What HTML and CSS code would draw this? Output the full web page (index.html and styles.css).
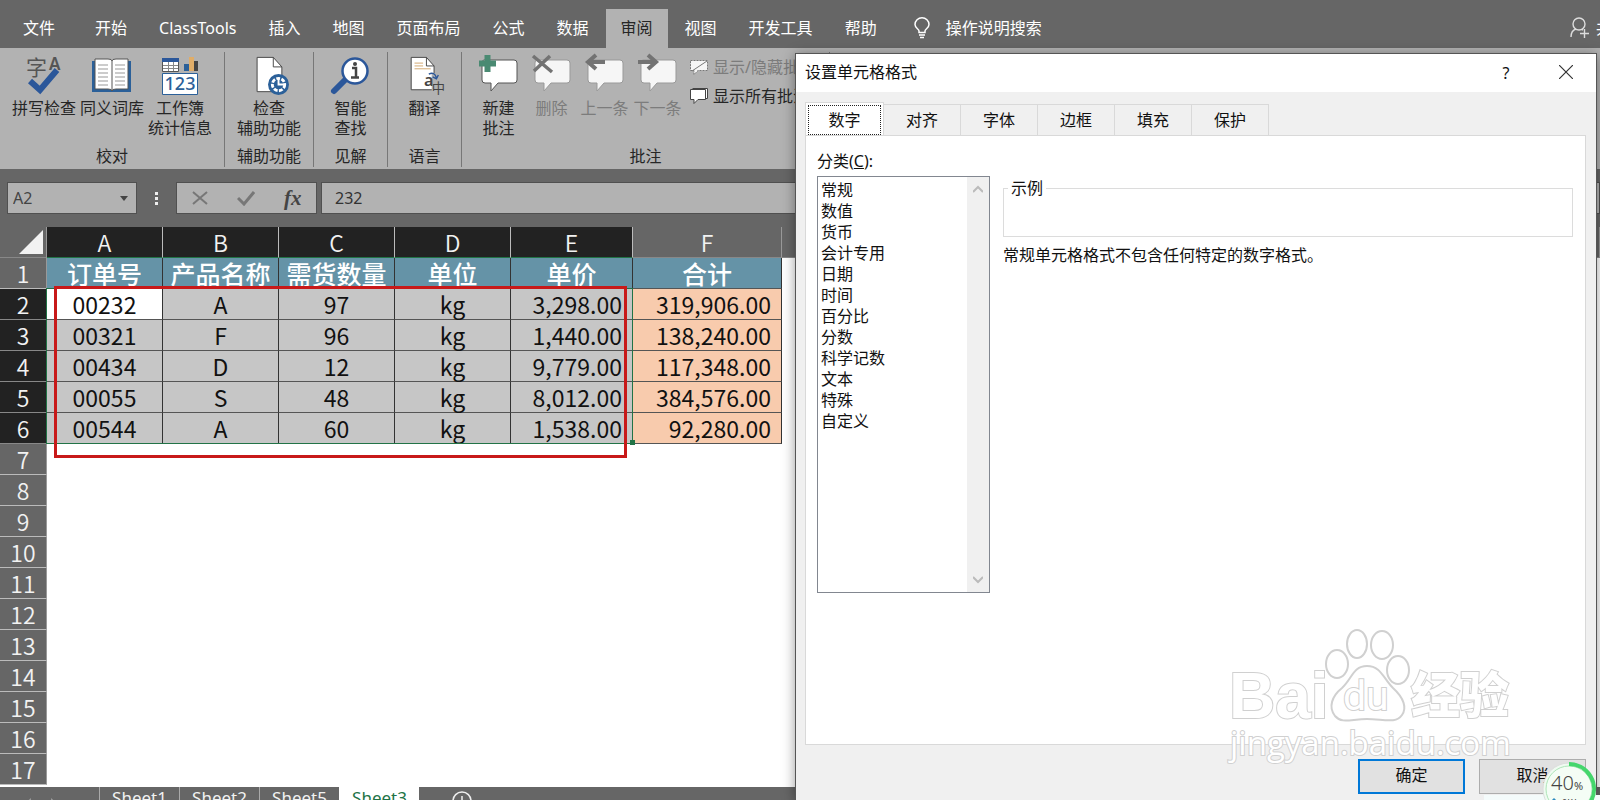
FILE: index.html
```html
<!DOCTYPE html>
<html lang="zh-CN">
<head>
    <meta charset="UTF-8">
    <meta name="viewport" content="width=device-width, initial-scale=1.0">
    <title>设置单元格格式</title>
    <link rel="stylesheet" href="styles.css">
</head>
<body>
    <nav class="menu">
        <button class="menu-tab file">文件</button>
        <button class="menu-tab">开始</button>
        <button class="menu-tab">ClassTools</button>
        <button class="menu-tab">插入</button>
        <button class="menu-tab">地图</button>
        <button class="menu-tab">页面布局</button>
        <button class="menu-tab">公式</button>
        <button class="menu-tab">数据</button>
        <button class="menu-tab active">审阅</button>
        <button class="menu-tab">视图</button>
        <button class="menu-tab">开发工具</button>
        <button class="menu-tab">帮助</button>
        <button class="tell-me">
            <svg width="16" height="22" viewBox="0 0 16 22" fill="none" stroke="#fff" stroke-width="1.5"><path d="M5 15.500V14C5 12 1 11 1 7.500a7 6.700 0 0 1 14 0C15 11 11 12 11 14v1.500zM5 18h6M6 20.500h4"/></svg>
            操作说明搜索
        </button>
        <button class="share">
            <svg width="20" height="22" viewBox="0 0 20 22" fill="none" stroke="#ddd" stroke-width="1.400"><circle cx="9" cy="7" r="6"/><path d="M1 20c0-5 2-7 5-8M12 12.500l1 .5M10 16.500h9M14.500 12v9"/></svg>
            共享
        </button>
    </nav>

    <section class="ribbon">
        <div class="group proof">
            <div class="tools">
                <button class="tool">
                    <svg width="40" height="40" viewBox="0 0 40 40"><text class="zi" x="2" y="20">字</text><text class="latin" x="25" y="15">A</text><path d="M6 26l10 9L33 15" fill="none" stroke="#2b579a" stroke-width="6"/></svg>
                    <span>拼写检查</span>
                </button>
                <button class="tool">
                    <svg width="40" height="40" viewBox="0 0 40 40"><path d="M0 6h39v31H0z" fill="#2b6099"/><path d="M3 4h13q4 0 4 2 0-2 4-2h12v30H24q-4 0-4 2 0-2-4-2H3z" fill="#fff" stroke="#555"/><path d="M20 6v30" stroke="#555"/><path d="M6 10h10M6 14h10M6 18h10M6 22h10M6 26h10M6 30h10M23 10h10M23 14h10M23 18h10M23 22h10M23 26h10M23 30h10" stroke="#999"/></svg>
                    <span>同义词库</span>
                </button>
                <button class="tool">
                    <svg width="40" height="40" viewBox="0 0 40 40"><path d="M2.500 3.500h16v13h-16z" fill="#fff" stroke="#555"/><path d="M2 3h17v4H2z" fill="#2b579a"/><path d="M3 10.500h15M3 13.500h15M8.500 7v9M13.500 7v9" stroke="#888"/><path d="M24 9h5v7h-5z" fill="#2b6099"/><path d="M29 2h5v14h-5z" fill="#e0ad68"/><path d="M34 6h4v10h-4z" fill="#444"/><path d="M2.500 18.500h35v21h-35z" fill="#fff" stroke="#2b6099"/><text class="num" x="20" y="35">123</text></svg>
                    <span>工作簿<br>统计信息</span>
                </button>
            </div>
            <div class="group-name">校对</div>
        </div>
        <div class="group access">
            <div class="tools">
                <button class="tool">
                    <svg width="40" height="42" viewBox="0 0 40 42"><path d="M7.500 2.500h17l9 10v26h-26z" fill="#fff" stroke="#444"/><path d="M24.500 2.500v10h9" fill="none" stroke="#444"/><circle cx="30" cy="31" r="11" fill="#2b6099"/><circle cx="30" cy="31" r="6.500" fill="none" stroke="#fff" stroke-width="3" stroke-dasharray="4 1.500"/><path d="M30 24v7h7" fill="none" stroke="#fff" stroke-width="2"/></svg>
                    <span>检查<br>辅助功能</span>
                </button>
            </div>
            <div class="group-name">辅助功能</div>
        </div>
        <div class="group insight">
            <div class="tools">
                <button class="tool">
                    <svg width="40" height="40" viewBox="0 0 40 40"><path d="M3 36L14 25" stroke="#2b579a" stroke-width="6" stroke-linecap="round"/><circle cx="24" cy="16" r="12.500" fill="#fff" stroke="#2b579a" stroke-width="2.500"/><path d="M21 13h4v9M20 22.500h8" stroke="#444" stroke-width="2.500" fill="none"/><circle cx="24" cy="9" r="2" fill="#444"/></svg>
                    <span>智能<br>查找</span>
                </button>
            </div>
            <div class="group-name">见解</div>
        </div>
        <div class="group lang">
            <div class="tools">
                <button class="tool">
                    <svg width="40" height="42" viewBox="0 0 40 42"><path d="M5.500 2.500h16l8 9v25h-24z" fill="#fff" stroke="#444"/><path d="M21.500 2.500v9h8" fill="none" stroke="#444"/><path d="M9 8.500h9M9 11.500h9M9 14.500h17" stroke="#d2a56d"/><path d="M27 19h13v23H27z" fill="#b2b2b2"/><text class="lat-a" x="19" y="33">a</text><text class="zh" x="27" y="40">中</text><path d="M24 20q6-3 8 4m-4-1l4 2 2-4" fill="none" stroke="#2b579a" stroke-width="1.500"/></svg>
                    <span>翻译</span>
                </button>
            </div>
            <div class="group-name">语言</div>
        </div>
        <div class="group comments">
            <div class="tools">
                <button class="tool">
                    <svg width="40" height="40" viewBox="0 0 40 40"><path d="M5 5h30q3 0 3 3v17q0 3-3 3H19l-7 8v-8H6q-3 0-3-3V8q0-3 2-3z" fill="#fff" stroke="#555"/><path d="M0 8.500H17M8.500 0V17" stroke="#4a8a72" stroke-width="6"/></svg>
                    <span>新建<br>批注</span>
                </button>
                <button class="tool" disabled>
                    <svg width="40" height="40" viewBox="0 0 40 40"><path d="M5 5h30q3 0 3 3v17q0 3-3 3H19l-7 8v-8H6q-3 0-3-3V8q0-3 2-3z" fill="#f6f6f6" stroke="#999"/><path d="M1 1l19 16M18 1L2 16" stroke="#737373" stroke-width="3.500"/></svg>
                    <span>删除</span>
                </button>
                <button class="tool" disabled>
                    <svg width="40" height="40" viewBox="0 0 40 40"><path d="M5 5h30q3 0 3 3v17q0 3-3 3H19l-7 8v-8H6q-3 0-3-3V8q0-3 2-3z" fill="#f6f6f6" stroke="#999"/><path d="M3 7h17M11 0L3 7l8 7" fill="none" stroke="#737373" stroke-width="4"/></svg>
                    <span>上一条</span>
                </button>
                <button class="tool" disabled>
                    <svg width="40" height="40" viewBox="0 0 40 40"><path d="M5 5h30q3 0 3 3v17q0 3-3 3H19l-7 8v-8H6q-3 0-3-3V8q0-3 2-3z" fill="#f6f6f6" stroke="#999"/><path d="M0 7h17M10 0l8 7-8 7" fill="none" stroke="#737373" stroke-width="4"/></svg>
                    <span>下一条</span>
                </button>
                <div class="small-tools">
                    <button class="small-tool" disabled>
                        <svg width="20" height="18" viewBox="0 0 20 18"><path d="M1.500 2.500h17v10H9l-4 4v-4H1.500z" fill="#f6f6f6" stroke="#777" stroke-dasharray="2 1"/><path d="M3 13L18 3" stroke="#777"/></svg>
                        显示/隐藏批注
                    </button>
                    <button class="small-tool">
                        <svg width="20" height="18" viewBox="0 0 20 18"><path d="M3.500 1.500h15v10h-3" fill="#fff" stroke="#444"/><path d="M1.500 2.500h15v10H9l-4 4v-4H1.500z" fill="#fff" stroke="#444"/></svg>
                        显示所有批注
                    </button>
                </div>
            </div>
            <div class="group-name">批注</div>
        </div>
    </section>

    <section class="formula-bar">
        <div class="name-box">
            <input type="text" value="A2" aria-label="名称框">
            <svg width="8" height="5" viewBox="0 0 8 5"><path d="M0 0h8L4 5z" fill="#444"/></svg>
        </div>
        <div class="dots"><i></i><i></i><i></i></div>
        <div class="fx">
            <button aria-label="取消输入"><svg width="16" height="16" viewBox="0 0 16 16"><path d="M1 2l14 12M15 2L1 14" stroke="#777" stroke-width="2"/></svg></button>
            <button aria-label="输入"><svg width="18" height="16" viewBox="0 0 18 16"><path d="M1 8l6 6L17 2" fill="none" stroke="#777" stroke-width="3"/></svg></button>
            <button class="fx-button">fx</button>
        </div>
        <input class="formula" type="text" value="232" aria-label="编辑栏">
    </section>

    <main class="sheet">
        <table>
            <colgroup>
                <col class="w-head"><col class="w-cell"><col class="w-cell"><col class="w-cell"><col class="w-cell"><col class="w-price"><col class="w-total"><col>
            </colgroup>
            <thead>
                <tr>
                    <th class="corner"><svg width="26" height="26" viewBox="0 0 26 26"><path d="M25 1v24H1z" fill="#f2f2f2"/></svg></th>
                    <th class="on">A</th><th class="on">B</th><th class="on">C</th><th class="on">D</th><th class="on">E</th><th>F</th><th></th>
                </tr>
            </thead>
            <tbody>
                <tr class="titles"><th>1</th><td>订单号</td><td>产品名称</td><td>需货数量</td><td>单位</td><td>单价</td><td>合计</td><td class="blank"></td></tr>
                <tr class="data"><th>2</th><td class="current">00232</td><td>A</td><td>97</td><td>kg</td><td class="price">3,298.00</td><td class="total">319,906.00</td><td class="blank"></td></tr>
                <tr class="data"><th>3</th><td>00321</td><td>F</td><td>96</td><td>kg</td><td class="price">1,440.00</td><td class="total">138,240.00</td><td class="blank"></td></tr>
                <tr class="data"><th>4</th><td>00434</td><td>D</td><td>12</td><td>kg</td><td class="price">9,779.00</td><td class="total">117,348.00</td><td class="blank"></td></tr>
                <tr class="data"><th>5</th><td>00055</td><td>S</td><td>48</td><td>kg</td><td class="price">8,012.00</td><td class="total">384,576.00</td><td class="blank"></td></tr>
                <tr class="data"><th>6</th><td>00544</td><td>A</td><td>60</td><td>kg</td><td class="price">1,538.00</td><td class="total">92,280.00</td><td class="blank"></td></tr>
                <tr><th>7</th><td class="blank" colspan="7"></td></tr>
                <tr><th>8</th><td class="blank" colspan="7"></td></tr>
                <tr><th>9</th><td class="blank" colspan="7"></td></tr>
                <tr><th>10</th><td class="blank" colspan="7"></td></tr>
                <tr><th>11</th><td class="blank" colspan="7"></td></tr>
                <tr><th>12</th><td class="blank" colspan="7"></td></tr>
                <tr><th>13</th><td class="blank" colspan="7"></td></tr>
                <tr><th>14</th><td class="blank" colspan="7"></td></tr>
                <tr><th>15</th><td class="blank" colspan="7"></td></tr>
                <tr><th>16</th><td class="blank" colspan="7"></td></tr>
                <tr><th>17</th><td class="blank" colspan="7"></td></tr>
            </tbody>
        </table>
        <div class="selection"></div>
        <div class="red-box"></div>
    </main>

    <footer class="sheet-tabs">
        <div class="arrows">
            <svg width="36" height="14" viewBox="0 0 36 14"><path d="M8 1v12L1 7zM28 1v12l7-6z" fill="#999"/></svg>
        </div>
        <button>Sheet1</button>
        <button>Sheet2</button>
        <button>Sheet5</button>
        <button class="active">Sheet3</button>
        <button class="add" aria-label="新工作表"><svg width="20" height="20" viewBox="0 0 20 20" fill="none" stroke="#eee" stroke-width="1.500"><circle cx="10" cy="10" r="9"/><path d="M10 5v10M5 10h10"/></svg></button>
    </footer>

    <div class="dialog" role="dialog" aria-labelledby="dialogTitle">
        <div class="title-bar">
            <h1 id="dialogTitle">设置单元格格式</h1>
            <button aria-label="帮助">?</button>
            <button aria-label="关闭"><svg width="14" height="14" viewBox="0 0 14 14"><path d="M0 0l14 14M14 0L0 14" stroke="#333" stroke-width="1.200"/></svg></button>
        </div>
        <div class="dialog-tabs">
            <button class="active"><span>数字</span></button>
            <button>对齐</button>
            <button>字体</button>
            <button>边框</button>
            <button>填充</button>
            <button>保护</button>
        </div>
        <div class="panel">
            <div class="category">
                <label for="categoria">分类(<u>C</u>):</label>
                <div class="list-box">
                    <select id="categoria" size="12">
                        <option>常规</option>
                        <option>数值</option>
                        <option>货币</option>
                        <option>会计专用</option>
                        <option>日期</option>
                        <option>时间</option>
                        <option>百分比</option>
                        <option>分数</option>
                        <option>科学记数</option>
                        <option>文本</option>
                        <option>特殊</option>
                        <option>自定义</option>
                    </select>
                    <div class="scroll">
                        <svg width="10" height="8" viewBox="0 0 10 8"><path d="M0 7l5-5 5 5" fill="none" stroke="#bbb" stroke-width="2"/></svg>
                        <svg width="10" height="8" viewBox="0 0 10 8"><path d="M0 1l5 5 5-5" fill="none" stroke="#bbb" stroke-width="2"/></svg>
                    </div>
                </div>
            </div>
            <div class="details">
                <fieldset><legend>示例</legend></fieldset>
                <p>常规单元格格式不包含任何特定的数字格式。</p>
            </div>
        </div>
        <div class="dialog-footer">
            <button class="ok">确定</button>
            <button>取消</button>
        </div>
    </div>

    <!-- marca de agua -->
    <svg class="watermark" width="300" height="150" viewBox="0 0 300 150">
        <g>
            <text class="bai" x="4" y="93">Bai</text>
            <ellipse cx="112" cy="39" rx="11" ry="14"/>
            <ellipse cx="132" cy="19" rx="10" ry="14"/>
            <ellipse cx="157" cy="20" rx="11" ry="14"/>
            <ellipse cx="173" cy="45" rx="11" ry="14"/>
            <path d="M142 41c14 0 16 12 26 22 11 10 14 20 9 27-6 9-19 4-35 4s-25 5-32-3c-7-9-3-20 7-28 10-9 11-22 25-22z"/>
            <text class="du" x="118" y="85">du</text>
            <text class="jingyan" x="186" y="88">经验</text>
            <text class="url" x="5" y="130">jingyan.baidu.com</text>
        </g>
    </svg>

    <div class="speed">
        <svg width="116" height="62" viewBox="0 0 116 62">
            <path d="M0 44h116v18H0z" fill="#f4fbfb"/>
            <circle cx="85" cy="38" r="26" fill="#effbf1" stroke="#ddd"/>
            <circle cx="85" cy="38" r="23" fill="#f4fdf5" stroke="#aee5b9"/>
            <path d="M85 13a25 25 0 0 1 22 37" fill="none" stroke="#44d66c" stroke-width="4"/>
            <text class="percent" x="67" y="39">40</text>
            <text class="unit" x="90" y="39">%</text>
            <path d="M70 55v-7m-2 2l2-2 2 2" fill="none" stroke="#2d8ac0" stroke-width="1.500"/>
            <text class="rate" x="78" y="55">0K/s</text>
        </svg>
    </div>
</body>
</html>
```
FILE: styles.css
```css
* {
    box-sizing: border-box;
    margin: 0;
    padding: 0;
}

body {
    position: relative;
    height: 100vh;
    overflow: hidden;
    background-color: #666;
    color: #262626;
    font-family: "Noto Sans", "Noto Sans CJK SC", sans-serif;
    font-size: 16px;
}

button, input, select {
    font: inherit;
    color: inherit;
    background: none;
    border: none;
}

svg {
    flex: none;
}

/* Menu */
.menu {
    display: flex;
    gap: 2px;
    height: 48px;
    padding-top: 9px;
    color: white;
}

.menu button {
    flex: none;
    white-space: nowrap;
    line-height: 24px;
    padding-bottom: 2px;
}

.menu .menu-tab {
    padding: 0 15px 2px;
}

.menu .file {
    width: 78px;
}

.menu .active {
    background-color: #b2b2b2;
    color: #262626;
}

.menu .tell-me {
    display: flex;
    align-items: center;
    gap: 16px;
    margin-left: 20px;
}

.menu .share {
    display: flex;
    align-items: center;
    gap: 6px;
    margin-left: auto;
    margin-right: -28px;
}

/* Ribbon */
.ribbon {
    display: flex;
    height: 121px;
    padding-top: 4px;
    background-color: #b2b2b2;
}

.group {
    display: flex;
    flex: none;
    flex-direction: column;
    justify-content: space-between;
    height: 115px;
    border-right: 1px solid #777;
}

.proof {
    width: 225px;
    padding-left: 10px;
}

.access {
    width: 89px;
}

.insight, .lang {
    width: 74px;
}

.comments {
    width: 368px;
    padding-left: 10px;
}

.tools {
    display: flex;
    justify-content: center;
    padding-top: 3px;
}

.proof .tools, .comments .tools {
    justify-content: flex-start;
}

.tool {
    display: flex;
    flex-direction: column;
    align-items: center;
    width: 68px;
    line-height: 20px;
    white-space: nowrap;
}

.tool svg {
    height: 40px;
    margin-bottom: 3px;
    overflow: visible;
}

.comments .tool {
    width: 53px;
}

.tool:disabled, .small-tool:disabled {
    color: #7c7c7c;
}

.group-name {
    text-align: center;
    line-height: 22px;
}

.proof .group-name, .comments .group-name {
    margin-left: -10px;
}

.small-tools {
    display: flex;
    flex-direction: column;
    gap: 5px;
    padding-left: 5px;
}

.small-tool {
    display: flex;
    align-items: center;
    gap: 4px;
    height: 24px;
    line-height: 24px;
    white-space: nowrap;
}

.zi {
    font-size: 21px;
    fill: #555;
}

.latin {
    font-size: 17px;
    font-weight: 600;
    fill: #555;
}

.num {
    font-size: 18px;
    font-weight: 500;
    text-anchor: middle;
    fill: #2b6099;
}

.lat-a {
    font-size: 17px;
    font-weight: 600;
    fill: #444;
}

.zh {
    font-size: 14px;
    fill: #444;
}

/* Formula bar */
.formula-bar {
    display: flex;
    height: 58px;
    padding: 13px 0 12px 7px;
}

.name-box, .fx, .formula {
    height: 32px;
    background-color: #b2b2b2;
    border: 1px solid #505050;
    color: #444;
}

.name-box {
    display: flex;
    align-items: center;
    width: 130px;
    padding: 0 8px 0 5px;
}

.name-box input {
    flex: 1;
    min-width: 0;
}

.dots {
    display: flex;
    flex-direction: column;
    justify-content: center;
    align-items: center;
    gap: 2px;
    width: 39px;
}

.dots i {
    width: 3px;
    height: 3px;
    background-color: #eee;
}

.fx {
    display: flex;
    align-items: center;
    width: 141px;
}

.fx button {
    display: flex;
    flex: 1;
    justify-content: center;
}

.fx .fx-button {
    font-family: "Liberation Serif", serif;
    font-size: 21px;
    font-style: italic;
    font-weight: bold;
    line-height: 24px;
}

.formula {
    flex: 1;
    margin-left: 4px;
    padding-left: 13px;
    color: #333;
}

/* Sheet */
.sheet {
    position: relative;
    height: 560px;
    background-color: white;
}

.sheet table {
    width: 100%;
    table-layout: fixed;
    border-collapse: separate;
    border-spacing: 0;
    font-family: "Noto Sans CJK SC", sans-serif;
    font-size: 23px;
    color: #111;
}

.w-head {
    width: 47px;
}

.w-cell {
    width: 116px;
}

.w-price {
    width: 122px;
}

.w-total {
    width: 149px;
}

.sheet th, .sheet td {
    height: 31px;
    line-height: 30px;
    text-align: center;
    border-right: 1px solid #333;
    border-bottom: 1px solid #555;
}

.sheet th {
    background-color: #666;
    color: #f2f2f2;
    font-weight: 350;
    border-right-color: #999;
    border-bottom-color: #bbb;
}

.sheet thead th {
    border-bottom-color: #888;
}

.sheet thead .on, .sheet .data th {
    background-color: #222;
}

.sheet thead .on {
    border-right-color: #bbb;
    border-bottom-color: #217346;
}

.sheet .data th {
    border-bottom-color: #888;
}

.sheet .corner svg {
    display: block;
    margin-left: 18px;
}

.sheet .titles td {
    background-color: #6593a7;
    color: white;
    font-size: 25px;
    font-weight: 500;
}

.sheet .data td {
    background-color: #c6c6c6;
    font-weight: 400;
}

.sheet .data .current {
    background-color: white;
}

.sheet .data .price, .sheet .data .total {
    text-align: right;
    padding-right: 10px;
}

.sheet .data .total {
    background-color: #f8cbad;
}

.sheet .titles .blank, .sheet .data .blank, .sheet .blank {
    background-color: white;
    border: none;
}

.selection {
    position: absolute;
    left: 46px;
    top: 61px;
    width: 587px;
    height: 156px;
    border: 1px solid #217346;
}

.selection::after {
    content: "";
    position: absolute;
    right: -3px;
    bottom: -2px;
    width: 5px;
    height: 5px;
    background-color: #217346;
}

.red-box {
    position: absolute;
    left: 54px;
    top: 59px;
    width: 573px;
    height: 172px;
    border: 3px solid #c81919;
}

/* Sheet tabs */
.sheet-tabs {
    display: flex;
    height: 30px;
    color: #f2f2f2;
    font-size: 17px;
    line-height: 20px;
}

.arrows {
    width: 99px;
    padding: 8px 0 0 23px;
}

.sheet-tabs button {
    width: 80px;
    height: 22px;
    border-left: 1px solid #aaa;
}

.sheet-tabs .active {
    background-color: white;
    color: #217346;
    border-left-color: white;
}

.sheet-tabs .add {
    display: flex;
    justify-content: center;
    padding-top: 4px;
    width: 86px;
    border: none;
}

/* Dialog */
.dialog {
    position: absolute;
    top: 53px;
    right: 3px;
    bottom: 0;
    left: 795px;
    display: flex;
    flex-direction: column;
    background-color: #f0f0f0;
    border: 1px solid #555;
    border-bottom: none;
    box-shadow: 0 2px 12px rgba(0, 0, 0, 0.4);
    color: #111;
}

.title-bar {
    display: flex;
    align-items: center;
    height: 38px;
    padding-left: 9px;
    background-color: white;
}

.title-bar h1 {
    flex: 1;
    font-size: 16px;
    font-weight: normal;
    line-height: 20px;
    padding-bottom: 2px;
}

.title-bar button {
    width: 60px;
    line-height: 24px;
}

.dialog-tabs {
    display: flex;
    align-items: flex-end;
    height: 43px;
    padding-left: 9px;
}

.dialog-tabs button {
    width: 77px;
    height: 31px;
    border: 1px solid #d9d9d9;
    border-left: none;
    border-bottom: none;
    line-height: 28px;
}

.dialog-tabs .active {
    width: 79px;
    height: 33px;
    padding: 2px;
    background-color: white;
    border-left: 1px solid #d9d9d9;
}

.dialog-tabs .active span {
    display: block;
    border: 1px dotted #222;
}

.panel {
    display: flex;
    flex: 1;
    gap: 13px;
    margin: 0 10px 0 9px;
    padding: 13px 12px 0 11px;
    background-color: white;
    border: 1px solid #d9d9d9;
}

.category label {
    display: block;
    line-height: 24px;
    margin-bottom: 3px;
}

.list-box {
    display: flex;
    width: 173px;
    height: 417px;
    border: 1px solid #828790;
}

.list-box select {
    flex: 1;
    min-width: 0;
    overflow: hidden;
    outline: none;
}

.list-box option {
    height: 21px;
    min-height: 0;
    padding: 0 3px;
}

.scroll {
    display: flex;
    flex-direction: column;
    justify-content: space-between;
    align-items: center;
    width: 22px;
    padding: 8px 0;
    background-color: #f0f0f0;
}

.details {
    flex: 1;
    padding-top: 27px;
}

.details fieldset {
    height: 61px;
    border: 1px solid #dcdcdc;
}

.details legend {
    margin-left: 4px;
    padding: 0 3px;
    line-height: 24px;
}

.details p {
    margin-top: 6px;
    line-height: 24px;
}

.dialog-footer {
    display: flex;
    justify-content: flex-end;
    gap: 14px;
    height: 55px;
    padding: 14px 10px 0;
}

.dialog-footer button {
    width: 107px;
    height: 35px;
    background-color: #e1e1e1;
    border: 1px solid #adadad;
    line-height: 24px;
    padding-bottom: 3px;
}

.dialog-footer .ok {
    border: 2px solid #0078d7;
}

/* Watermark */
.watermark {
    position: absolute;
    right: 75px;
    bottom: 25px;
    fill: white;
    stroke: #d0d0d0;
    stroke-width: 2px;
    pointer-events: none;
}

.watermark text {
    paint-order: stroke;
}

.bai {
    font-family: "Liberation Sans", sans-serif;
    font-size: 64px;
    font-weight: bold;
}

.du {
    font-family: Roboto, sans-serif;
    font-size: 41px;
}

.jingyan {
    font-family: "Noto Sans CJK SC", sans-serif;
    font-size: 49px;
    font-weight: 900;
}

.url {
    font-family: "Open Sans", sans-serif;
    font-size: 33px;
}

/* Speed ball */
.speed {
    position: absolute;
    right: 0;
    bottom: -13px;
    height: 62px;
}

.percent {
    font-size: 20px;
    font-weight: 300;
    fill: #444;
}

.unit {
    font-size: 11px;
    fill: #444;
}

.rate {
    font-size: 9px;
    fill: #333;
}
```
